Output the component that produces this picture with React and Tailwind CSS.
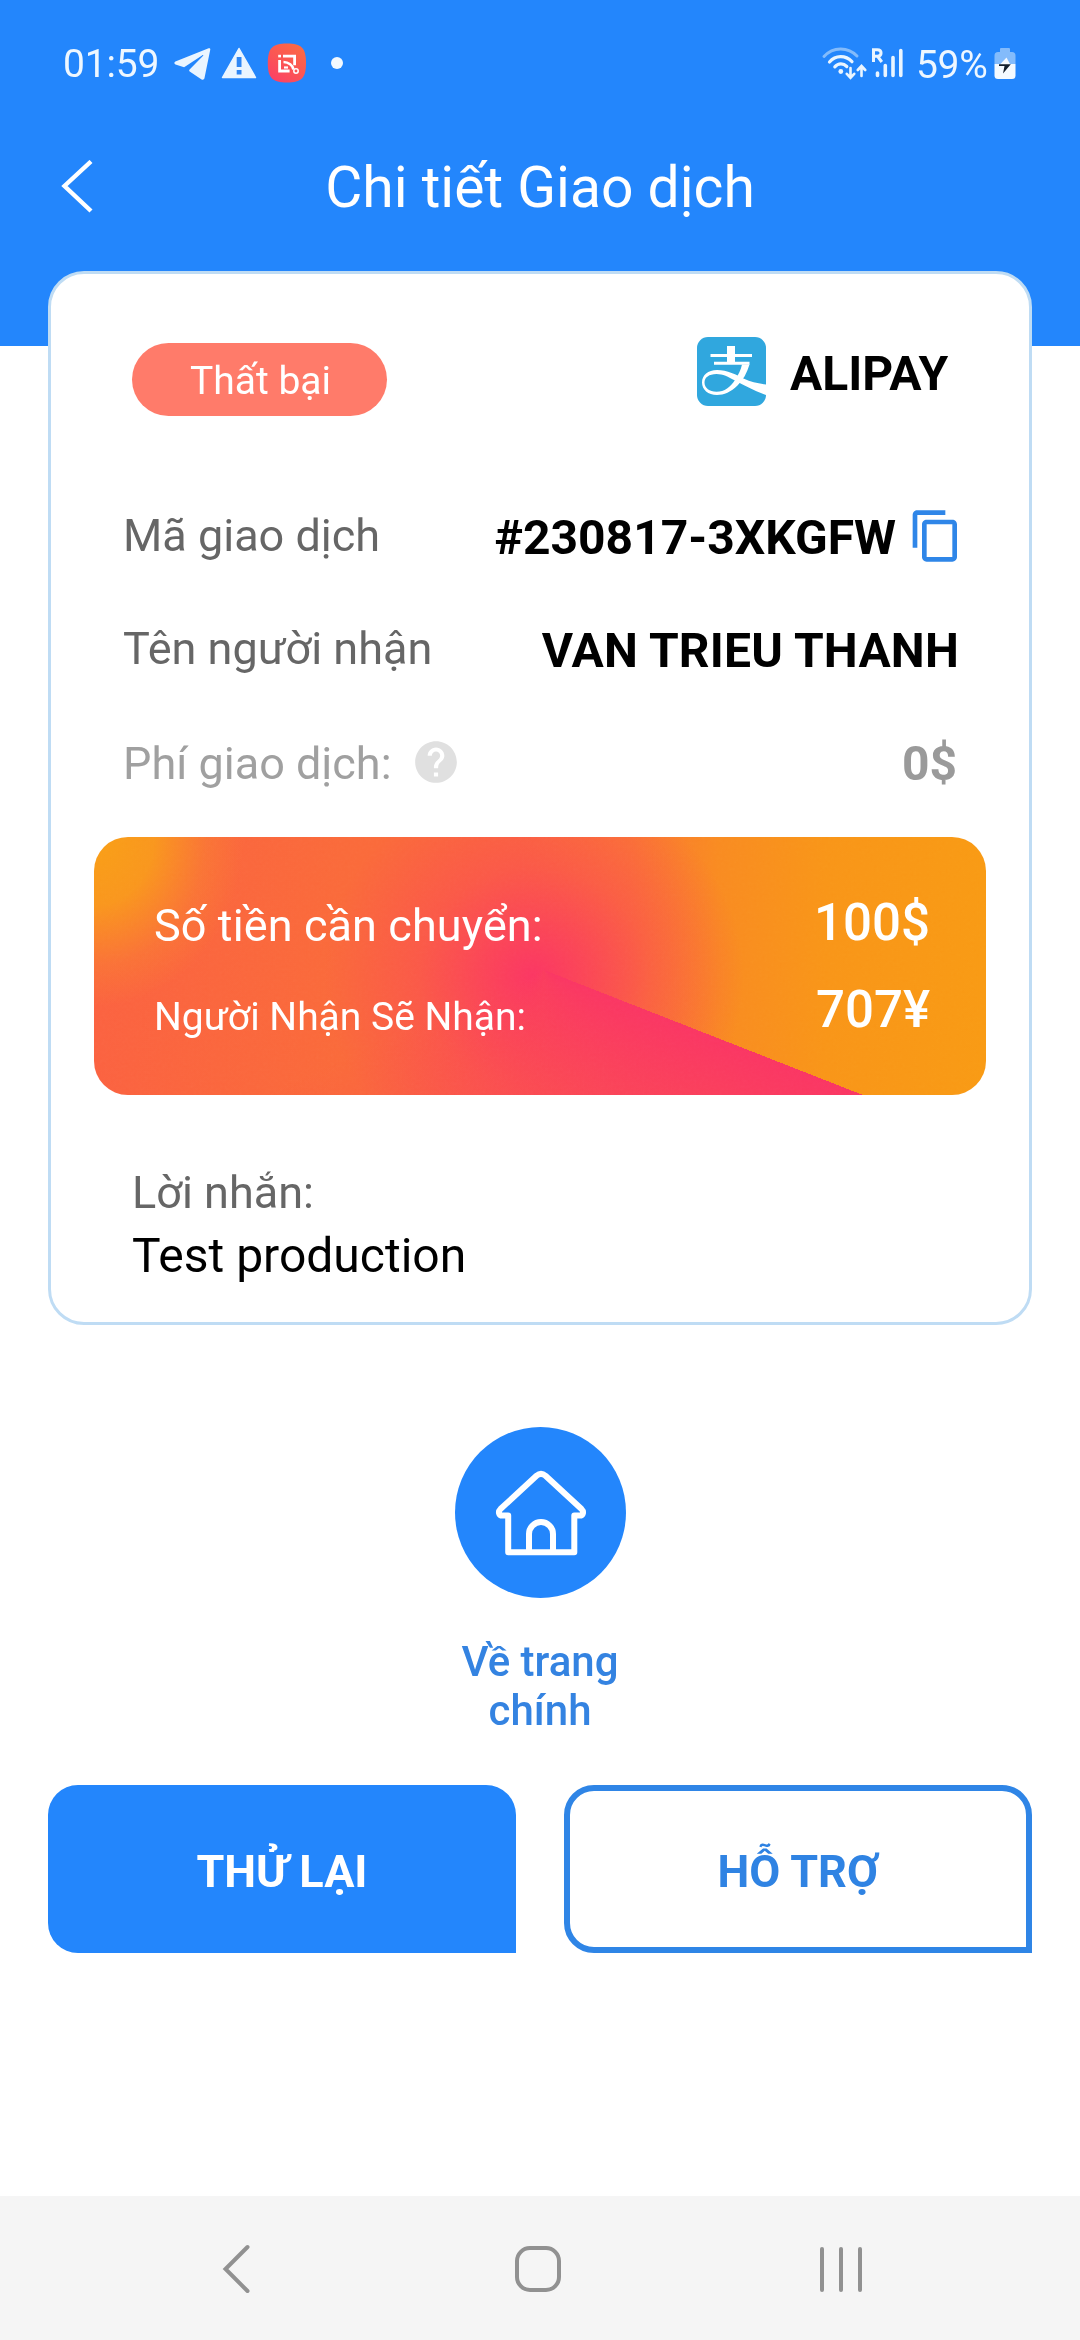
import React from "react";
import { MdContentCopy, MdHelp } from "react-icons/md";

function StatusBar() {
  return (
    <div className="flex h-[126px] items-center pl-[63px] text-[39px] leading-[46px] text-[#eef7ff]">
      <span className="w-[111px] pt-[1px] tracking-[-0.200px]">01:59</span>
      <svg className="h-[33px] w-[37px]" viewBox="0 0 37 33" fill="#eaf5ff">
        <path d="M34.6 1.3 1.4 14.6c-1.5.8-1.4 2.3.1 2.8l8.6 2.8L28 8.400c1.200-.8 1.800-.2.9.6L15.600 22.500c-.6.7-.6 1.300.1 1.900l11.900 8c1.300.8 2.500.2 2.900-1.300L36.200 3c.4-1.500-.4-2.200-1.600-1.700z" />
      </svg>
      <svg className="ml-[10px] h-[32px] w-[36px]" viewBox="0 0 36 32">
        <path d="M18 1.500 34.500 30.500H1.500Z" fill="#eaf5ff" stroke="#eaf5ff" strokeWidth="1.500" strokeLinejoin="round" />
        <path d="M15.700 10h4.800v10h-4.800zM15.700 23h4.800v4.500h-4.800z" fill="#2e86f3" />
      </svg>
      <svg className="ml-[10px] h-[40px] w-[40px]" viewBox="0 0 40 40">
        <defs>
          <linearGradient id="appIcon" x1="0.1" y1="1" x2="0.8" y2="0">
            <stop offset="0" stopColor="#fb3f66" />
            <stop offset="1" stopColor="#fb6b43" />
          </linearGradient>
        </defs>
        <path d="M20 .5C34.500.5 39 5 39 20S34.500 39.500 20 39.500.8 35 .8 20 5.500.5 20 .5Z" fill="url(#appIcon)" />
        <g fill="none" stroke="#fff" strokeWidth="2.800">
          <path d="M16 13.200h11.600v9" />
          <path d="M12.600 17v11h10" />
          <path d="M16.500 19c5 0 9.500 3.500 10 7.500" strokeWidth="2.600" />
          <path d="M17 24.500h4" strokeWidth="2.200" />
        </g>
        <path d="M11.200 11.800h2.800v2.600h-2.800z" fill="#fff" />
        <circle cx="29" cy="28" r="2.200" fill="none" stroke="#fff" strokeWidth="1.500" />
      </svg>
      <span className="ml-[24px] h-[12px] w-[12px] rounded-full bg-[#f2f9ff]" />
      <svg className="ml-[478px] h-[36px] w-[46px]" viewBox="0 0 46 36" fill="none" strokeLinecap="round">
        <path d="M3 11.500C12 1.500 27 1.500 36 11" stroke="#83bbfb" strokeWidth="3" />
        <path d="M8.500 17c6-7 16-7 22.500-.3M13.800 21.800c3.500-3.800 8.500-3.800 12-.3" stroke="#eaf5ff" strokeWidth="3.200" />
        <circle cx="19.800" cy="26.500" r="2.400" fill="#eaf5ff" />
        <path d="M29.500 23v9M25.800 28.800l3.700 4 3.700-4M40.500 31v-9.500M36.800 25l3.700-4 3.700 4" stroke="#eaf5ff" strokeWidth="2.600" />
      </svg>
      <svg className="ml-[4px] h-[32px] w-[32px]" viewBox="0 0 32 32" fill="none" stroke="#eaf5ff" strokeLinecap="round" strokeWidth="3.600">
        <path d="M6.500 26v2.500M14.300 18.500v10M22 10.500v18M29.800 3.500v25" />
        <path d="M2.500 15V2.800h3.800c5 0 5 6.400 0 6.400H2.500M6.800 9.500l4 5.500" strokeWidth="3" strokeLinecap="butt" />
      </svg>
      <span className="ml-[13px] w-[77px] pt-[3px] tracking-[-0.300px]">59%</span>
      <svg className="ml-[1px] h-[33px] w-[22px]" viewBox="0 0 22 33">
        <path d="M7 1h8q1 0 1 1v3h2q3.500 0 3.500 3.500V17H.5V8.500Q.5 5 4 5h2V2q0-1 1-1z" fill="#83bbfb" />
        <path d="M.5 17h21v11.500q0 3.500-3.500 3.500H4q-3.500 0-3.500-3.500z" fill="#f5faff" />
        <path d="M12.500 10.500 5.500 18h11z" fill="#f5faff" />
        <path d="M5 17.300h11.800L9 26.500l1.500-7.500H5z" fill="#14202e" />
      </svg>
    </div>
  );
}

function Header() {
  return (
    <header className="h-[346px] shrink-0 bg-[#2386fc]">
      <StatusBar />
      <div className="grid h-[122px] grid-cols-[1fr_auto_1fr] items-center">
        <svg className="ml-[60px] h-[54px] w-[34px]" viewBox="0 0 34 54" fill="none" stroke="#fff" strokeWidth="4.400">
          <path d="M31 1.500 4.500 26 31 51" />
        </svg>
        <h1 className="pt-[1px] text-[57px] leading-[70px] whitespace-nowrap text-white">Chi tiết Giao dịch</h1>
      </div>
    </header>
  );
}

function AlipayLogo() {
  return (
    <svg className="h-[69px] w-[69px]" viewBox="0 0 69 69">
      <rect width="69" height="69" rx="11" fill="#30a7de" />
      <g fill="#fff">
        <path d="M30 9h8v17h-8zM13.500 17h41.500v3H13.500zM17 24.700h35.500v3H17z" />
        <path d="M45 27.500h7.500C50 36 46 43 40.500 48.500 34 55 27 58 20 58 11 58 5 52.500 5 45.500 5 38 11 33 20 33c10 0 20 5 27 8.800 7 3.200 14 4.700 22 5.700v10.500C58 54 48 48.800 38 43.500 31 39.800 26 37 19.500 37 12 37 7.500 40.500 7.500 45.500c0 5.500 5 9.300 12 9.300 8 0 14-4.800 18.500-11.800C41 38 44 33 45 27.500Z" />
      </g>
    </svg>
  );
}

function AmountPanel() {
  return (
    <div className="relative mx-[43px] mt-[41px] h-[258px] overflow-hidden rounded-[34px] bg-[radial-gradient(ellipse_150px_170px_at_0px_0px,#f99f16_0%,#f99c1ae6_40%,#f98a2a66_75%,#f9802e00_100%),conic-gradient(from_111.400deg_at_450px_133px,#fa3663_0deg,#fa3a60cc_35deg,#fa3f5b99_70deg,#fa455600_135deg,#fa455600_360deg),radial-gradient(ellipse_210px_200px_at_440px_140px,#fb3663_0%,#fb3c5ecc_25%,#fb485580_55%,#fb4c5200_100%),linear-gradient(to_right,#fb6240_0%,#fa6a3a_28%,#fa6a3a_48%,#fa7632_60%,#f98b21_70%,#f99518_82%,#f99a14_100%)]">
      <svg className="absolute inset-0 h-full w-full opacity-10 mix-blend-soft-light">
        <filter id="grain">
          <feTurbulence type="fractalNoise" baseFrequency="0.35" numOctaves="2" />
          <feColorMatrix type="saturate" values="0" />
        </filter>
        <rect width="100%" height="100%" filter="url(#grain)" />
      </svg>
      <div className="relative pt-[56px] pr-[56px] pl-[60px] text-white">
        <div className="flex h-[60px] items-center justify-between">
          <span className="pt-[5px] text-[45px] leading-[60px] tracking-[0.100px]">Số tiền cần chuyển:</span>
          <span className="text-[51px] leading-[60px] font-medium">100$</span>
        </div>
        <div className="mt-[27px] flex h-[60px] items-center justify-between">
          <span className="pt-[13px] text-[39px] leading-[50px]">Người Nhận Sẽ Nhận:</span>
          <span className="text-[51px] leading-[60px] font-medium">707¥</span>
        </div>
      </div>
    </div>
  );
}

function DetailCard() {
  return (
    <section className="relative mx-[48px] -mt-[75px] h-[1054px] shrink-0 rounded-[36px] border-[3px] border-[#bfdcf4] bg-white">
      <div className="mt-[63px] flex h-[79px] items-start pl-[81px]">
        <div className="mt-[6px] h-[73px] w-[255px] rounded-[37px] bg-[#ff7b6a] pt-[2px] pl-[2px] text-center text-[39px] leading-[73px] text-white">
          Thất bại
        </div>
        <div className="ml-[310px] flex items-center">
          <AlipayLogo />
          <span className="ml-[24px] pt-[4px] text-[48px] leading-[65px] font-bold text-black">ALIPAY</span>
        </div>
      </div>

      <div className="mt-[89px] flex h-[65px] items-center justify-between pr-[65px] pl-[72px]">
        <span className="pb-[4px] text-[45px] leading-[60px] text-[#666]">Mã giao dịch</span>
        <span className="flex items-center">
          <span className="text-[48px] leading-[65px] font-bold text-black">#230817-3XKGFW</span>
          <MdContentCopy className="mb-[4px] ml-[12px] h-[56px] w-[56px] text-[#2f86e8]" />
        </span>
      </div>
      <div className="mt-[48px] flex h-[65px] items-center justify-between pr-[70px] pl-[72px]">
        <span className="pb-[4px] text-[45px] leading-[60px] text-[#666]">Tên người nhận</span>
        <span className="text-[48px] leading-[65px] font-bold tracking-[0.200px] text-black">VAN TRIEU THANH</span>
      </div>
      <div className="mt-[48px] flex h-[65px] items-center justify-between pr-[72px] pl-[72px]">
        <span className="flex items-center text-[45px] leading-[65px] text-[#a0a0a0]">
          Phí giao dịch:
          <MdHelp className="mb-[3px] ml-[19px] h-[50px] w-[50px] text-[#e0e0e0]" />
        </span>
        <span className="text-[48px] leading-[65px] font-bold text-[#9a9a9a]">0$</span>
      </div>

      <AmountPanel />

      <div className="mt-[66px] flex flex-col pl-[81px] leading-[63px]">
        <span className="text-[45px] text-[#666]">Lời nhắn:</span>
        <span className="text-[48px] text-black">Test production</span>
      </div>
    </section>
  );
}

function HomeShortcut() {
  return (
    <div className="mt-[102px] flex shrink-0 flex-col items-center">
      <div className="h-[171px] w-[171px] rounded-full bg-[#2386fc]">
        <svg className="h-[171px] w-[171px]" viewBox="0 0 171 171" fill="none" stroke="#fff" strokeWidth="6" strokeLinejoin="round">
          <path d="M53.200 125.200V88.600H47.500C43.500 88.600 43 84.500 45.500 82L81.500 48.800Q86 45 90.500 48.800L126.500 82C129 84.500 128.500 88.600 124.500 88.600H119.300V125.200Z" />
          <path d="M74 125V107a12 12 0 0 1 24 0v18" />
        </svg>
      </div>
      <p className="mt-[39px] w-[200px] text-center text-[42px] leading-[49px] font-medium text-[#3483e1]">
        Về trang
        <br />
        chính
      </p>
    </div>
  );
}

function Actions() {
  return (
    <div className="mt-[50px] grid h-[168px] shrink-0 grid-cols-2 gap-[48px] px-[48px] text-[45px] font-bold">
      <button className="rounded-[30px] rounded-br-none bg-[#2386fc] pt-[5px] text-white">THỬ LẠI</button>
      <button className="rounded-[30px] rounded-br-none border-[6px] border-[#2f85e6] pt-[5px] text-[#2f83e3]">HỖ TRỢ</button>
    </div>
  );
}

function NavBar() {
  return (
    <nav className="mt-auto flex h-[144px] shrink-0 items-center bg-[#f5f5f5] pt-[2px] pl-[221px]">
      <svg className="h-[52px] w-[30px]" viewBox="0 0 30 52" fill="none" stroke="#919191" strokeWidth="4" strokeLinecap="round">
        <path d="M26.500 4 4.500 26l22 22" />
      </svg>
      <span className="ml-[264px] h-[46px] w-[46px] rounded-[15px] border-4 border-[#919191]" />
      <span className="ml-[259px] flex gap-[15px]">
        <i className="h-[45px] w-[4px] rounded-full bg-[#919191]" />
        <i className="h-[45px] w-[4px] rounded-full bg-[#919191]" />
        <i className="h-[45px] w-[4px] rounded-full bg-[#919191]" />
      </span>
    </nav>
  );
}

export default function App() {
  return (
    <main className="flex h-[2340px] w-[1080px] flex-col overflow-hidden bg-white font-['Roboto',sans-serif]">
      <Header />
      <DetailCard />
      <HomeShortcut />
      <Actions />
      <NavBar />
    </main>
  );
}
